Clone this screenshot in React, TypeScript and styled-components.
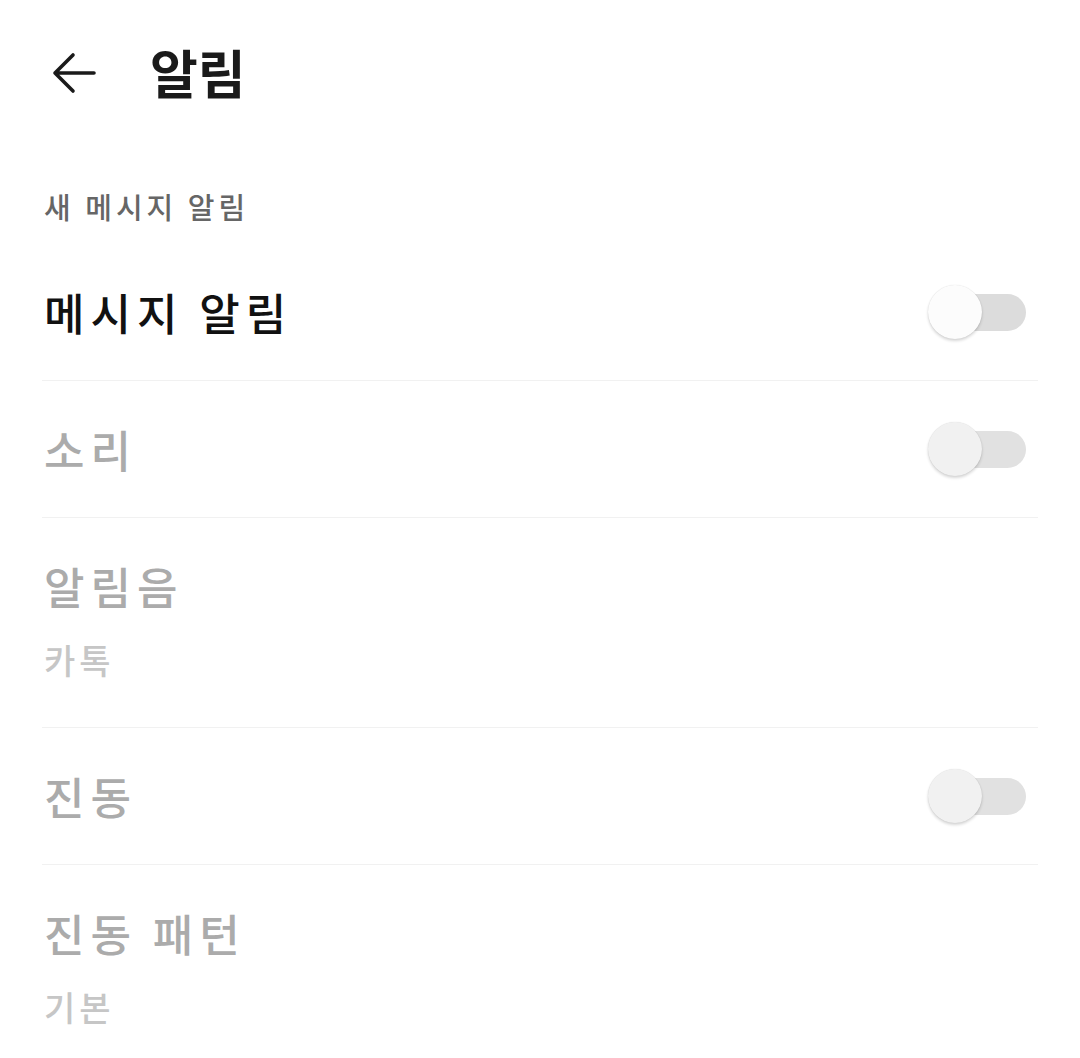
import React from "react";
import styled, { createGlobalStyle } from "styled-components";

const GlobalStyle = createGlobalStyle`
  body {
    margin: 0;
    background: #ffffff;
    font-family: "Noto Sans CJK KR", "Noto Sans", sans-serif;
  }
`;

const Page = styled.div`
  width: 1080px;
  height: 1058px;
  background: #ffffff;
  overflow: hidden;
`;

const Header = styled.div`
  height: 146px;
  display: flex;
  align-items: center;
  padding: 0 52px;
  gap: 54px;
`;

const BackButton = styled.button`
  border: 0;
  background: none;
  padding: 0;
  width: 44px;
  height: 42px;
  display: flex;
  align-items: center;
  justify-content: center;
  color: #1a1a1a;
`;

const Title = styled.h1`
  margin: 0;
  font-size: 52px;
  font-weight: 700;
  color: #1a1a1a;
  line-height: 1;
  padding-bottom: 2px;
`;

const SectionTitle = styled.div`
  height: 98px;
  box-sizing: border-box;
  display: flex;
  align-items: flex-end;
  padding: 0 44px 20px;
  font-size: 29px;
  font-weight: 500;
  line-height: 36px;
  letter-spacing: 4px;
  color: #666666;
`;

const List = styled.div`
  margin: 0 42px;
`;

const Row = styled.div<{ $tall?: boolean }>`
  box-sizing: border-box;
  height: ${(p) => (p.$tall ? 210 : 137)}px;
  border-bottom: 1px solid #f1f1f1;
  display: flex;
  align-items: ${(p) => (p.$tall ? "flex-start" : "center")};
  justify-content: space-between;
  padding: ${(p) => (p.$tall ? "38px 12px 0 2px" : "0 12px 0 2px")};
`;

const Texts = styled.div`
  display: flex;
  flex-direction: column;
  gap: 20px;
`;

const Label = styled.div<{ $disabled?: boolean }>`
  font-size: 44px;
  font-weight: 500;
  line-height: 60px;
  letter-spacing: 6px;
  color: ${(p) => (p.$disabled ? "#ababab" : "#111111")};
`;

const SubLabel = styled.div`
  font-size: 34px;
  font-weight: 500;
  line-height: 48px;
  letter-spacing: 4px;
  color: #c6c6c6;
`;

const Switch = styled.div`
  position: relative;
  width: 98px;
  height: 55px;
`;

const Track = styled.div<{ $disabled?: boolean }>`
  position: absolute;
  left: 10px;
  right: 0;
  top: 9px;
  height: 37px;
  border-radius: 19px;
  background: ${(p) => (p.$disabled ? "#e1e1e1" : "#dcdcdc")};
`;

const Thumb = styled.div<{ $disabled?: boolean }>`
  position: absolute;
  left: 0;
  top: 0;
  width: 54px;
  height: 54px;
  border-radius: 50%;
  background: ${(p) => (p.$disabled ? "#f1f1f1" : "#fcfcfc")};
  box-shadow: 0 2px 3px rgba(0, 0, 0, 0.16), 0 0 1px rgba(0, 0, 0, 0.14);
`;

const Toggle = ({ disabled }: { disabled?: boolean }) => (
  <Switch>
    <Track $disabled={disabled} />
    <Thumb $disabled={disabled} />
  </Switch>
);

const BackArrow = () => (
  <svg width="44" height="42" viewBox="0 0 44 42" fill="none">
    <path
      d="M42 21H3M21 3L3 21L21 39"
      stroke="currentColor"
      strokeWidth="3.6"
      strokeLinecap="round"
      strokeLinejoin="round"
    />
  </svg>
);

export default function App() {
  return (
    <Page>
      <GlobalStyle />
      <Header>
        <BackButton>
          <BackArrow />
        </BackButton>
        <Title>알림</Title>
      </Header>
      <SectionTitle>새 메시지 알림</SectionTitle>
      <List>
        <Row>
          <Label>메시지 알림</Label>
          <Toggle />
        </Row>
        <Row>
          <Label $disabled>소리</Label>
          <Toggle disabled />
        </Row>
        <Row $tall>
          <Texts>
            <Label $disabled>알림음</Label>
            <SubLabel>카톡</SubLabel>
          </Texts>
        </Row>
        <Row>
          <Label $disabled>진동</Label>
          <Toggle disabled />
        </Row>
        <Row $tall>
          <Texts>
            <Label $disabled>진동 패턴</Label>
            <SubLabel>기본</SubLabel>
          </Texts>
        </Row>
      </List>
    </Page>
  );
}
